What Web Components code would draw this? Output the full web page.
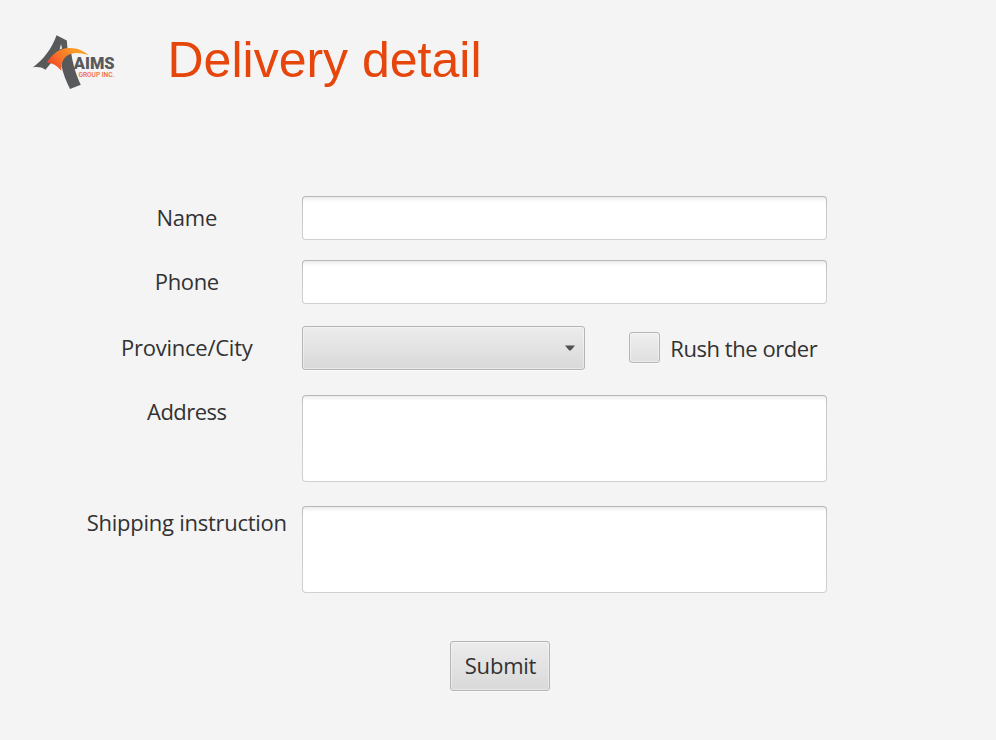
<!DOCTYPE html>
<html lang="en">
<head>
<meta charset="utf-8">
<title>Delivery detail</title>
<style>
html, body { margin: 0; height: 100%; background: #f4f4f4; overflow: hidden; }
body { font: 22px/30px "Open Sans", "Noto Sans", sans-serif; color: #323232; }
</style>
</head>
<body>
<delivery-page></delivery-page>
<script>
const define = (name, html, setup) => customElements.define(name, class extends HTMLElement {
  connectedCallback() {
    if (this.shadowRoot) return;
    this.attachShadow({ mode: 'open' }).innerHTML = html;
    if (setup) setup(this, this.shadowRoot);
  }
});

define('aims-logo', `
<style>:host{display:block;width:84px;height:56px} svg{display:block}
text{font-family:Roboto,"Liberation Sans",sans-serif}</style>
<svg width="84" height="56" viewBox="32 35 84 56">
  <defs><linearGradient id="o" gradientUnits="userSpaceOnUse" x1="54" y1="68" x2="74" y2="50">
    <stop offset="0" stop-color="#f04a23"/><stop offset=".4" stop-color="#f8702a"/><stop offset="1" stop-color="#fb9a24"/></linearGradient></defs>
  <path fill="#58595b" d="M56.600 35.200L66.800 40.400L67.500 49L55 58L45.500 69.800C41.500 67 37.500 66.700 32.800 67.400C43.500 59.500 51.500 49 56.600 35.200Z"/>
  <path fill="#f4f4f4" d="M61 44L59.600 49.500L62 48.500Z"/>
  <path fill="#58595b" d="M63 55L71 51.500C72.500 63 76 75 80.800 84.800L70 89C66 81 63 73 61.500 66Z"/>
  <path fill="url(#o)" d="M47 62.500C52 54.500 59 48 69 48C77.500 47.900 83.500 50.700 88.500 55C81 52.800 75 52.300 70.500 54C64 56.500 61 61.500 61.300 70.800C57 65.500 52.500 63 47 62.500Z"/>
  <text x="73.800" y="69" font-size="17.200" font-weight="900" fill="#58595b" textLength="40.800" lengthAdjust="spacingAndGlyphs">AIMS</text>
  <text x="78.500" y="76.500" font-size="6.800" font-weight="500" fill="#f0683f" textLength="35.800" lengthAdjust="spacingAndGlyphs">GROUP INC.</text>
</svg>`);

/* Text whose letter spacing is adjusted to fill the given width. */
define('fit-text', `
<style>:host{display:block;white-space:nowrap} span{display:inline-block}</style><span></span>`,
(host, root) => {
  const span = root.querySelector('span');
  const text = host.getAttribute('text');
  const width = +host.getAttribute('width');
  span.textContent = text;
  host.style.width = width + 'px';
  const natural = span.getBoundingClientRect().width;
  span.style.letterSpacing = (width - natural) / text.length + 'px';
});

define('text-box', `
<style>:host{display:block;box-sizing:border-box;width:525px;height:44px;border-radius:4px;padding:1px;
background:linear-gradient(#b6b6b6,#c8c8c8 12px,#d0d0d0)}
div{height:100%;border-radius:3px;background:linear-gradient(#ececec,#fff 5px)}
:host([tall]){height:87px}</style><div></div>`);

const raised = `box-sizing:border-box;border:1px solid #b5b5b5;border-radius:3px;
background:linear-gradient(#ececec,#d9d9d9);box-shadow:inset 0 0 0 1px rgba(255,255,255,.4),0 1px 0 #fafafa;`;

define('combo-box', `
<style>:host{display:flex;align-items:center;justify-content:flex-end;width:283px;height:44px;padding-right:9px;${raised}}</style>
<svg width="10" height="6" viewBox="0 0 10 6"><path fill="#505050" d="M0 .5H10L6 5.200Q5 6 4 5.200Z"/></svg>`);

define('check-box', `
<style>:host{display:flex;align-items:center;gap:10px;padding-bottom:1px}
i{width:31px;height:31px;${raised}background:linear-gradient(#efefef,#dfdfdf)}</style>
<i></i><slot></slot>`);

define('push-button', `
<style>:host{display:flex;align-items:center;justify-content:center;width:100px;height:50px;padding:0 0 2px 1px;${raised}}</style><slot></slot>`);

define('form-row', `
<style>:host{display:grid;grid-template-columns:232px auto;align-items:start}
.l{display:flex;justify-content:center;padding:6px 0 0 1px}
:host([top]) .l{padding-top:1px}
.f{display:flex;align-items:center;gap:44px}</style>
<div class="l"><slot name="label"></slot></div><div class="f"><slot></slot></div>`);

define('delivery-page', `
<style>
:host{display:block}
header{display:flex;align-items:flex-start;padding:35px 0 0 32px;height:196px;box-sizing:border-box;gap:51.500px}
h1{margin:-4px 0 0;font:50px/58px "Liberation Sans",Arial,sans-serif;color:#e6450b}
main{padding-left:70.300px;display:flex;flex-direction:column}
.g20{margin-top:20px}.g22{margin-top:22px}.g25{margin-top:25px}.g24{margin-top:24px}
footer{padding:48px 0 0 450px}
</style>
<header><aims-logo></aims-logo><h1>Delivery detail</h1></header>
<main>
<form-row><fit-text slot="label" text="Name" width="60.500"></fit-text><text-box></text-box></form-row>
<form-row class="g20"><fit-text slot="label" text="Phone" width="64"></fit-text><text-box></text-box></form-row>
<form-row class="g22"><fit-text slot="label" text="Province/City" width="131.500"></fit-text><combo-box></combo-box><check-box><fit-text text="Rush the order" width="147"></fit-text></check-box></form-row>
<form-row class="g25" top><fit-text slot="label" text="Address" width="79.500"></fit-text><text-box tall></text-box></form-row>
<form-row class="g24" top><fit-text slot="label" text="Shipping instruction" width="200"></fit-text><text-box tall></text-box></form-row>
</main>
<footer><push-button><fit-text text="Submit" width="71.500"></fit-text></push-button></footer>`);
</script>
</body>
</html>
